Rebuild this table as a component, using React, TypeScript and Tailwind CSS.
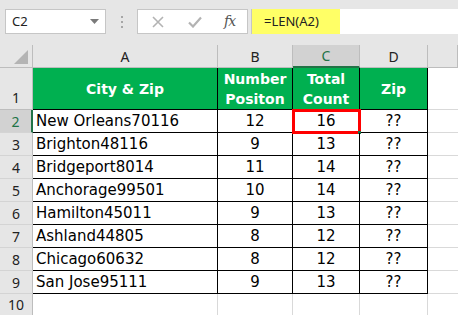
const rows = [
  { n: 2, city: "New Orleans70116", pos: 12, total: 16 },
  { n: 3, city: "Brighton48116", pos: 9, total: 13 },
  { n: 4, city: "Bridgeport8014", pos: 11, total: 14 },
  { n: 5, city: "Anchorage99501", pos: 10, total: 14 },
  { n: 6, city: "Hamilton45011", pos: 9, total: 13 },
  { n: 7, city: "Ashland44805", pos: 8, total: 12 },
  { n: 8, city: "Chicago60632", pos: 8, total: 12 },
  { n: 9, city: "San Jose95111", pos: 9, total: 13 },
]

const ui = { fontFamily: '"Noto Sans", "Open Sans", sans-serif' }
const cellFont = { fontFamily: '"DejaVu Sans", Verdana, sans-serif' }

function RowHead({ n, active }: { n: number; active?: boolean }) {
  return (
    <div
      style={ui}
      className={
        "flex items-center justify-center text-[14px] border-b border-[#d4d4d4] " +
        (active
          ? "bg-[#d2d2d2] text-[#217346] border-r-2 border-r-[#217346]"
          : "bg-[#e6e6e6] text-[#222] border-r border-r-[#bdbdbd]")
      }
    >
      {n}
    </div>
  )
}

export default function App() {
  return (
    <div className="w-[458px] h-[315px] overflow-hidden bg-white">
      {/* formula bar */}
      <div className="h-[45px] bg-[#e6e6e6] flex items-start pt-[9px] pl-[5px]">
        <div
          style={ui}
          className="w-[101px] h-[25px] bg-white border border-[#c6c6c6] flex items-center justify-between pl-[6px] pr-[6px] text-[13px] text-[#222]"
        >
          <span>C2</span>
          <svg width="9" height="5" viewBox="0 0 9 5">
            <path d="M0 0 H9 L4.5 5 Z" fill="#7a7a7a" />
          </svg>
        </div>
        <div className="w-[31px] h-[25px] flex flex-col items-center justify-center gap-[3px]">
          <span className="w-[2px] h-[2px] bg-[#a6a6a6]" />
          <span className="w-[2px] h-[2px] bg-[#a6a6a6]" />
          <span className="w-[2px] h-[2px] bg-[#a6a6a6]" />
        </div>
        <div className="w-[111px] h-[25px] bg-white border border-[#c6c6c6] flex items-center">
          <svg width="12" height="12" viewBox="0 0 12 12" className="ml-[14px]">
            <path d="M1 1 L11 11 M11 1 L1 11" stroke="#b3b3b3" strokeWidth="1.6" />
          </svg>
          <svg width="14" height="12" viewBox="0 0 14 12" className="ml-[24px]">
            <path d="M1 6.5 L5 10.5 L13 1.5" stroke="#b3b3b3" strokeWidth="2.2" fill="none" />
          </svg>
          <span
            style={{ fontFamily: '"DejaVu Serif", "Liberation Serif", serif' }}
            className="ml-[22px] italic text-[14px] text-[#555] tracking-[-1px]"
          >
            fx
          </span>
        </div>
        <div className="ml-[3px] flex-1 h-[25px] bg-white border-l border-[#c6c6c6] flex">
          <div style={ui} className="w-[88px] h-full bg-[#ffff66] flex items-center pl-[12px] text-[13px] text-[#222]">
            =LEN(A2)
          </div>
        </div>
      </div>

      {/* sheet grid */}
      <div className="grid grid-cols-[33px_185px_75px_67px_68px_1fr] grid-rows-[23px_42px_repeat(8,23px)_1fr] h-[270px]">
        {/* column headers */}
        <div className="bg-[#e6e6e6] border-r border-b border-[#bdbdbd] relative">
          <svg width="14" height="14" viewBox="0 0 14 14" className="absolute right-[4px] bottom-[3px]">
            <path d="M14 0 V14 H0 Z" fill="#b4b4b4" />
          </svg>
        </div>
        {["A", "B", "C", "D", ""].map((c) => (
          <div
            key={c || "E"}
            style={ui}
            className={
              "flex items-center justify-center text-[14px] border-r border-b border-[#bdbdbd] " +
              (c === "C" ? "bg-[#d2d2d2] text-[#217346] border-b-2 border-b-[#217346]" : "bg-[#e6e6e6] text-[#222]")
            }
          >
            {c}
          </div>
        ))}

        {/* row 1 */}
        <div
          style={ui}
          className="flex items-end justify-center pb-[1px] text-[14px] text-[#222] bg-[#e6e6e6] border-r border-b border-[#bdbdbd]"
        >
          1
        </div>
        <div style={cellFont} className="bg-[#00b050] text-white font-bold text-[14px] leading-[20px] flex items-center justify-center border-r border-b border-black">
          City &amp; Zip
        </div>
        <div style={cellFont} className="bg-[#00b050] text-white font-bold text-[14px] leading-[20px] flex items-center justify-center text-center border-r border-b border-black">
          Number
          <br />
          Positon
        </div>
        <div style={cellFont} className="bg-[#00b050] text-white font-bold text-[14px] leading-[20px] flex items-center justify-center text-center border-r border-b border-black">
          Total
          <br />
          Count
        </div>
        <div style={cellFont} className="bg-[#00b050] text-white font-bold text-[14px] leading-[20px] flex items-center justify-center border-r border-b border-black">
          Zip
        </div>
        <div className="border-b border-[#d9d9d9]" />

        {rows.map((r) => (
          <div key={r.n} className="contents">
            <RowHead n={r.n} active={r.n === 2} />
            <div style={cellFont} className="flex items-center pl-[3px] text-[15px] text-black border-r border-b border-black">
              {r.city}
            </div>
            <div style={cellFont} className="flex items-center justify-center text-[15px] text-black border-r border-b border-black">
              {r.pos}
            </div>
            <div style={cellFont} className="relative flex items-center justify-center text-[15px] text-black border-r border-b border-black">
              {r.total}
              {r.n === 2 && (
                <div className="absolute -left-[1px] -top-[1px] w-[69px] h-[25px] border-[3px] border-[#ff0000]">
                  <span className="absolute -right-[3px] -bottom-[3px] w-[3px] h-[3px] bg-[#217346]" />
                </div>
              )}
            </div>
            <div style={cellFont} className="flex items-center justify-center text-[15px] text-black border-r border-b border-black">
              ??
            </div>
            <div className="border-b border-[#d9d9d9]" />
          </div>
        ))}

        {/* row 10 */}
        <RowHead n={10} />
        <div className="border-r border-[#d9d9d9]" />
        <div className="border-r border-[#d9d9d9]" />
        <div className="border-r border-[#d9d9d9]" />
        <div className="border-r border-[#d9d9d9]" />
        <div />
      </div>
    </div>
  )
}
